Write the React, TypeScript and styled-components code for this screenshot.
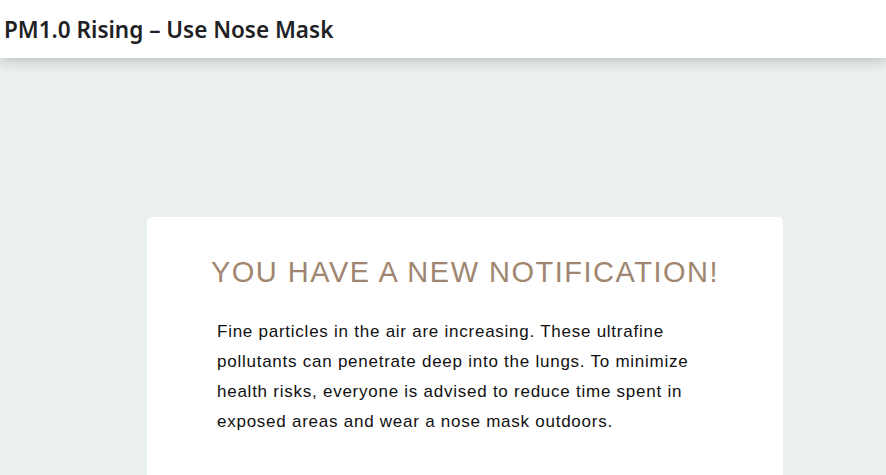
import React from 'react'
import styled, { createGlobalStyle } from 'styled-components'

const GlobalStyle = createGlobalStyle`
  html, body {
    margin: 0;
    padding: 0;
    background-color: #eaf0ef;
  }
  * {
    box-sizing: border-box;
  }
`

const Page = styled.div`
  display: flex;
  flex-flow: column;
  min-height: 100vh;
  background-color: #eaf0ef;
`

const Header = styled.header`
  position: relative;
  z-index: 2;
  display: flex;
  align-items: center;
  height: 58px;
  padding: 0 4px;
  background-color: #fff;
  box-shadow: 0 3px 12px rgba(0, 0, 0, 0.2);
`

const Title = styled.h1`
  margin: 0;
  font-family: 'Noto Sans', 'Open Sans', sans-serif;
  font-size: 22.5px;
  font-weight: 600;
  color: #1f2225;
`

const Main = styled.main`
  flex: 1;
  padding: 159px 103px 0 147px;
`

const Card = styled.section`
  background-color: #fff;
  border-radius: 5px 5px 0 0;
  padding: 38px 30px 40px;
  min-height: 258px;
`

const Heading = styled.h2`
  margin: 0 0 27px;
  text-align: center;
  white-space: nowrap;
  font-family: 'Liberation Sans', Arial, sans-serif;
  font-size: 29px;
  font-weight: 400;
  letter-spacing: 1.5px;
  line-height: 1.2;
  color: #a08671;
`

const Message = styled.p`
  margin: 0;
  padding: 0 40px;
  max-width: 570px;
  font-family: 'Liberation Sans', Arial, sans-serif;
  font-size: 17px;
  line-height: 30px;
  letter-spacing: 0.75px;
  color: #111;
`

export default function App() {
  return (
    <Page>
      <GlobalStyle />
      <Header>
        <Title>PM1.0 Rising – Use Nose Mask</Title>
      </Header>
      <Main>
        <Card>
          <Heading>YOU HAVE A NEW NOTIFICATION!</Heading>
          <Message>
            Fine particles in the air are increasing. These ultrafine pollutants can
            penetrate deep into the lungs. To minimize health risks, everyone is advised
            to reduce time spent in exposed areas and wear a nose mask outdoors.
          </Message>
        </Card>
      </Main>
    </Page>
  )
}
